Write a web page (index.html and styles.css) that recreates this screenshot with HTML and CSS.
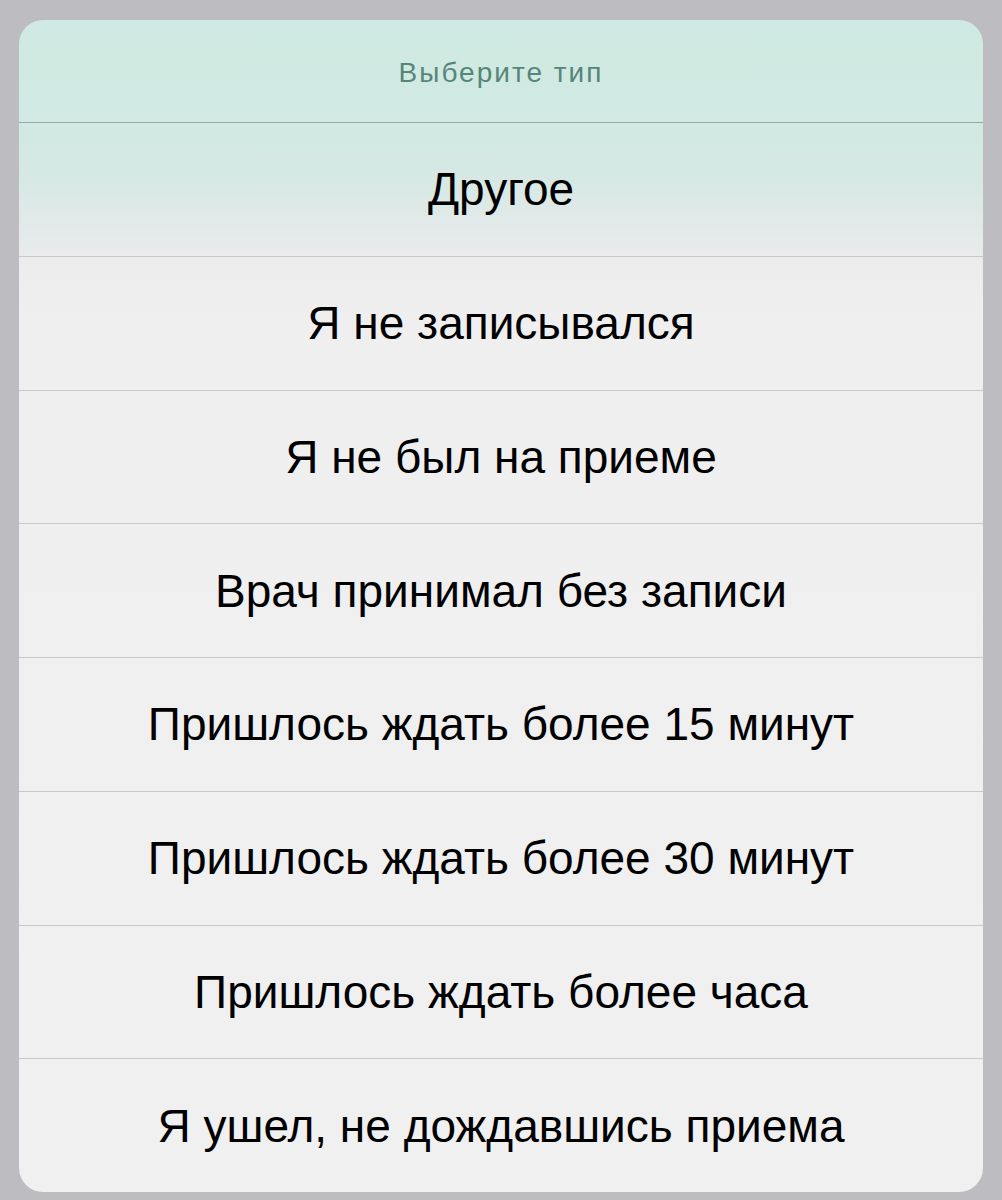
FILE: index.html
```html
<!DOCTYPE html>
<html lang="ru">
<head>
<meta charset="utf-8">
<title>Выберите тип</title>
<link rel="stylesheet" href="styles.css">
</head>
<body>
<div class="sheet">
  <div class="header">Выберите тип</div>
  <div class="option">Другое</div>
  <div class="option">Я не записывался</div>
  <div class="option">Я не был на приеме</div>
  <div class="option">Врач принимал без записи</div>
  <div class="option">Пришлось ждать более 15 минут</div>
  <div class="option">Пришлось ждать более 30 минут</div>
  <div class="option">Пришлось ждать более часа</div>
  <div class="option">Я ушел, не дождавшись приема</div>
</div>
</body>
</html>
```

FILE: styles.css
```css
html, body {
  margin: 0;
  padding: 0;
}
body {
  background: #bdbcc1;
  font-family: "Liberation Sans", Arial, sans-serif;
  width: 1002px;
  height: 1200px;
  overflow: hidden;
}
.sheet {
  margin: 20px 19px 0 19px;
  width: 964px;
  height: 1172px;
  border-radius: 24px;
  overflow: hidden;
  display: flex;
  flex-direction: column;
  background: linear-gradient(to bottom,
    #cfeae2 0px,
    #d1e9e2 110px,
    #d3e8e2 140px,
    #e6eaea 225px,
    #ececed 240px,
    #efeff0 300px,
    #f0f0f1 100%);
}
.header {
  box-sizing: border-box;
  height: 103px;
  padding-top: 4px;
  border-bottom: 1px solid #90aaa2;
  display: flex;
  align-items: center;
  justify-content: center;
  font-size: 28px;
  letter-spacing: 2px;
  color: #57857a;
}
.option {
  flex: 1;
  display: flex;
  align-items: center;
  justify-content: center;
  font-size: 46px;
  color: #000;
  border-top: 1px solid #c8c8ca;
}
.header + .option {
  border-top: none;
}
```
